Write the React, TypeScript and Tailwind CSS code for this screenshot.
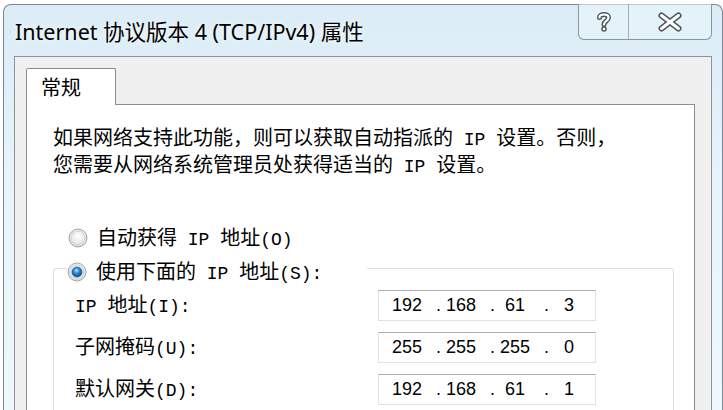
import React from "react";

const L = ({ children }: { children: React.ReactNode }) => (
  <span className="font-['Liberation_Mono',monospace] text-[18px]">{children}</span>
);

const Radio = ({ checked, id }: { checked?: boolean; id: string }) => (
  <svg width="20" height="20" viewBox="0 0 20 20" className="shrink-0">
    <defs>
      <radialGradient id={`rf${id}`} cx="50%" cy="40%" r="60%">
        <stop offset="0%" stopColor="#ffffff" />
        <stop offset="100%" stopColor="#dcdcdc" />
      </radialGradient>
      <radialGradient id={`rd${id}`} cx="45%" cy="35%" r="65%">
        <stop offset="0%" stopColor="#b5e4fb" />
        <stop offset="45%" stopColor="#2a8ad4" />
        <stop offset="100%" stopColor="#0c4a8c" />
      </radialGradient>
    </defs>
    <circle cx="10" cy="10" r="9" fill={`url(#rf${id})`} stroke="#a3a6aa" strokeWidth="1" />
    <circle cx="10" cy="10" r="7" fill="none" stroke="#d2d2d2" strokeWidth="1" />
    {checked && <circle cx="10" cy="10" r="5" fill={`url(#rd${id})`} stroke="#0d3e72" strokeWidth="0.6" />}
  </svg>
);

const IpBox = ({ parts }: { parts: string[] }) => (
  <div className="flex h-[31px] w-[218px] items-center border border-[#dfe3e8] border-t-[#abadb3] bg-white pl-[8px] font-['Liberation_Sans',sans-serif] text-[18px] text-black">
    {parts.map((p, i) => (
      <React.Fragment key={i}>
        <span className="w-[40px] text-center">{p}</span>
        {i < 3 && <span className="w-[14px] text-right">.</span>}
      </React.Fragment>
    ))}
  </div>
);

export default function App() {
  return (
    <div className="h-[410px] w-[723px] overflow-hidden bg-white font-['Noto_Sans_CJK_SC',sans-serif] text-black">
      <div className="ml-[3px] mt-[4px] flex h-[410px] w-[720px] flex-col rounded-t-[8px] border-l border-r border-t border-[#7d8896] bg-gradient-to-b from-[#dbecf6] via-[#e9f5fb] to-[#eef8fc]">
        {/* title bar */}
        <div className="flex h-[51px] shrink-0 items-start">
          <div className="pl-[11px] pt-[13px] font-['Noto_Sans','Noto_Sans_CJK_SC',sans-serif] text-[21.5px] leading-[28px] whitespace-nowrap [text-shadow:0_0_6px_#ffffff]">
            Internet 协议版本 4 (TCP/IPv4) 属性
          </div>
          <div className="ml-auto mr-[10px] -mt-px flex h-[36px] rounded-b-[6px] border-b border-l border-r border-[#8d949c] bg-[#eaf6fb]/60">
            <div className="flex w-[50px] items-center justify-center border-r border-[#a6adb5]">
              <svg width="16" height="22" viewBox="0 0 16 22">
                <path d="M3.5 6.5 C3.5 2.5 12.5 2.5 12.5 6.5 C12.5 10 8 10 8 13.5" fill="none" stroke="#50555d" strokeWidth="5" strokeLinecap="round" />
                <circle cx="8" cy="18" r="2.8" fill="#50555d" />
                <path d="M3.5 6.5 C3.5 2.5 12.5 2.5 12.5 6.5 C12.5 10 8 10 8 13.5" fill="none" stroke="#ffffff" strokeWidth="2.2" strokeLinecap="round" />
                <circle cx="8" cy="18" r="1.3" fill="#ffffff" />
              </svg>
            </div>
            <div className="flex w-[82px] items-center justify-center">
              <svg width="26" height="20" viewBox="0 0 26 20">
                <path d="M4.5 3.5 L21.5 16.5 M21.5 3.5 L4.5 16.5" stroke="#50555d" strokeWidth="6" strokeLinecap="round" />
                <path d="M4.5 3.5 L21.5 16.5 M21.5 3.5 L4.5 16.5" stroke="#ffffff" strokeWidth="3" strokeLinecap="round" />
              </svg>
            </div>
          </div>
        </div>

        {/* client area */}
        <div className="mx-[10px] flex flex-1 flex-col border-l border-r border-t border-[#8e9399] bg-[#f0f0f0] pl-[11px] pr-[16px] pt-[11px]">
          <div className="relative z-10 -mb-px flex h-[37px] w-[90px] items-center rounded-t-[2px] border-l border-r border-t border-[#898c95] bg-white pl-[14px] text-[20px]">
            常规
          </div>
          <div className="flex-1 border border-[#898c95] bg-white pl-[26px] pt-[20px]">
            <div className="whitespace-nowrap text-[20px] leading-[23px]">
              <div>如果网络支持此功能，则可以获取自动指派的<L> IP </L>设置。否则，</div>
              <div>您需要从网络系统管理员处获得适当的<L> IP </L>设置。</div>
            </div>

            <div className="mt-[47px] flex h-[24px] items-center pl-[15px] text-[20px] whitespace-nowrap">
              <Radio id="a" />
              <span className="ml-[9px]">
                自动获得<L> IP </L>地址<L>(O)</L>
              </span>
            </div>

            <fieldset className="mt-[3px] mr-[20px] rounded-[3px] border border-[#d5dfe5] pb-[20px]">
              <legend className="ml-[13px] w-[300px] pt-[7px]">
                <div className="flex h-[24px] items-center whitespace-nowrap text-[20px]">
                  <Radio id="b" checked />
                  <span className="ml-[9px]">
                    使用下面的<L> IP </L>地址<L>(S):</L>
                  </span>
                </div>
              </legend>
              <div className="mt-[6px] flex flex-col gap-[11px] pl-[21px]">
                {[
                  { label: <>
                      <L>IP </L>地址<L>(I):</L>
                    </>, parts: ["192", "168", "61", "3"] },
                  { label: <>
                      子网掩码<L>(U):</L>
                    </>, parts: ["255", "255", "255", "0"] },
                  { label: <>
                      默认网关<L>(D):</L>
                    </>, parts: ["192", "168", "61", "1"] },
                ].map((r, i) => (
                  <div key={i} className="flex items-center">
                    <div className="w-[303px] whitespace-nowrap text-[20px] leading-[26px]">{r.label}</div>
                    <IpBox parts={r.parts} />
                  </div>
                ))}
              </div>
            </fieldset>
          </div>
        </div>
      </div>
    </div>
  );
}
